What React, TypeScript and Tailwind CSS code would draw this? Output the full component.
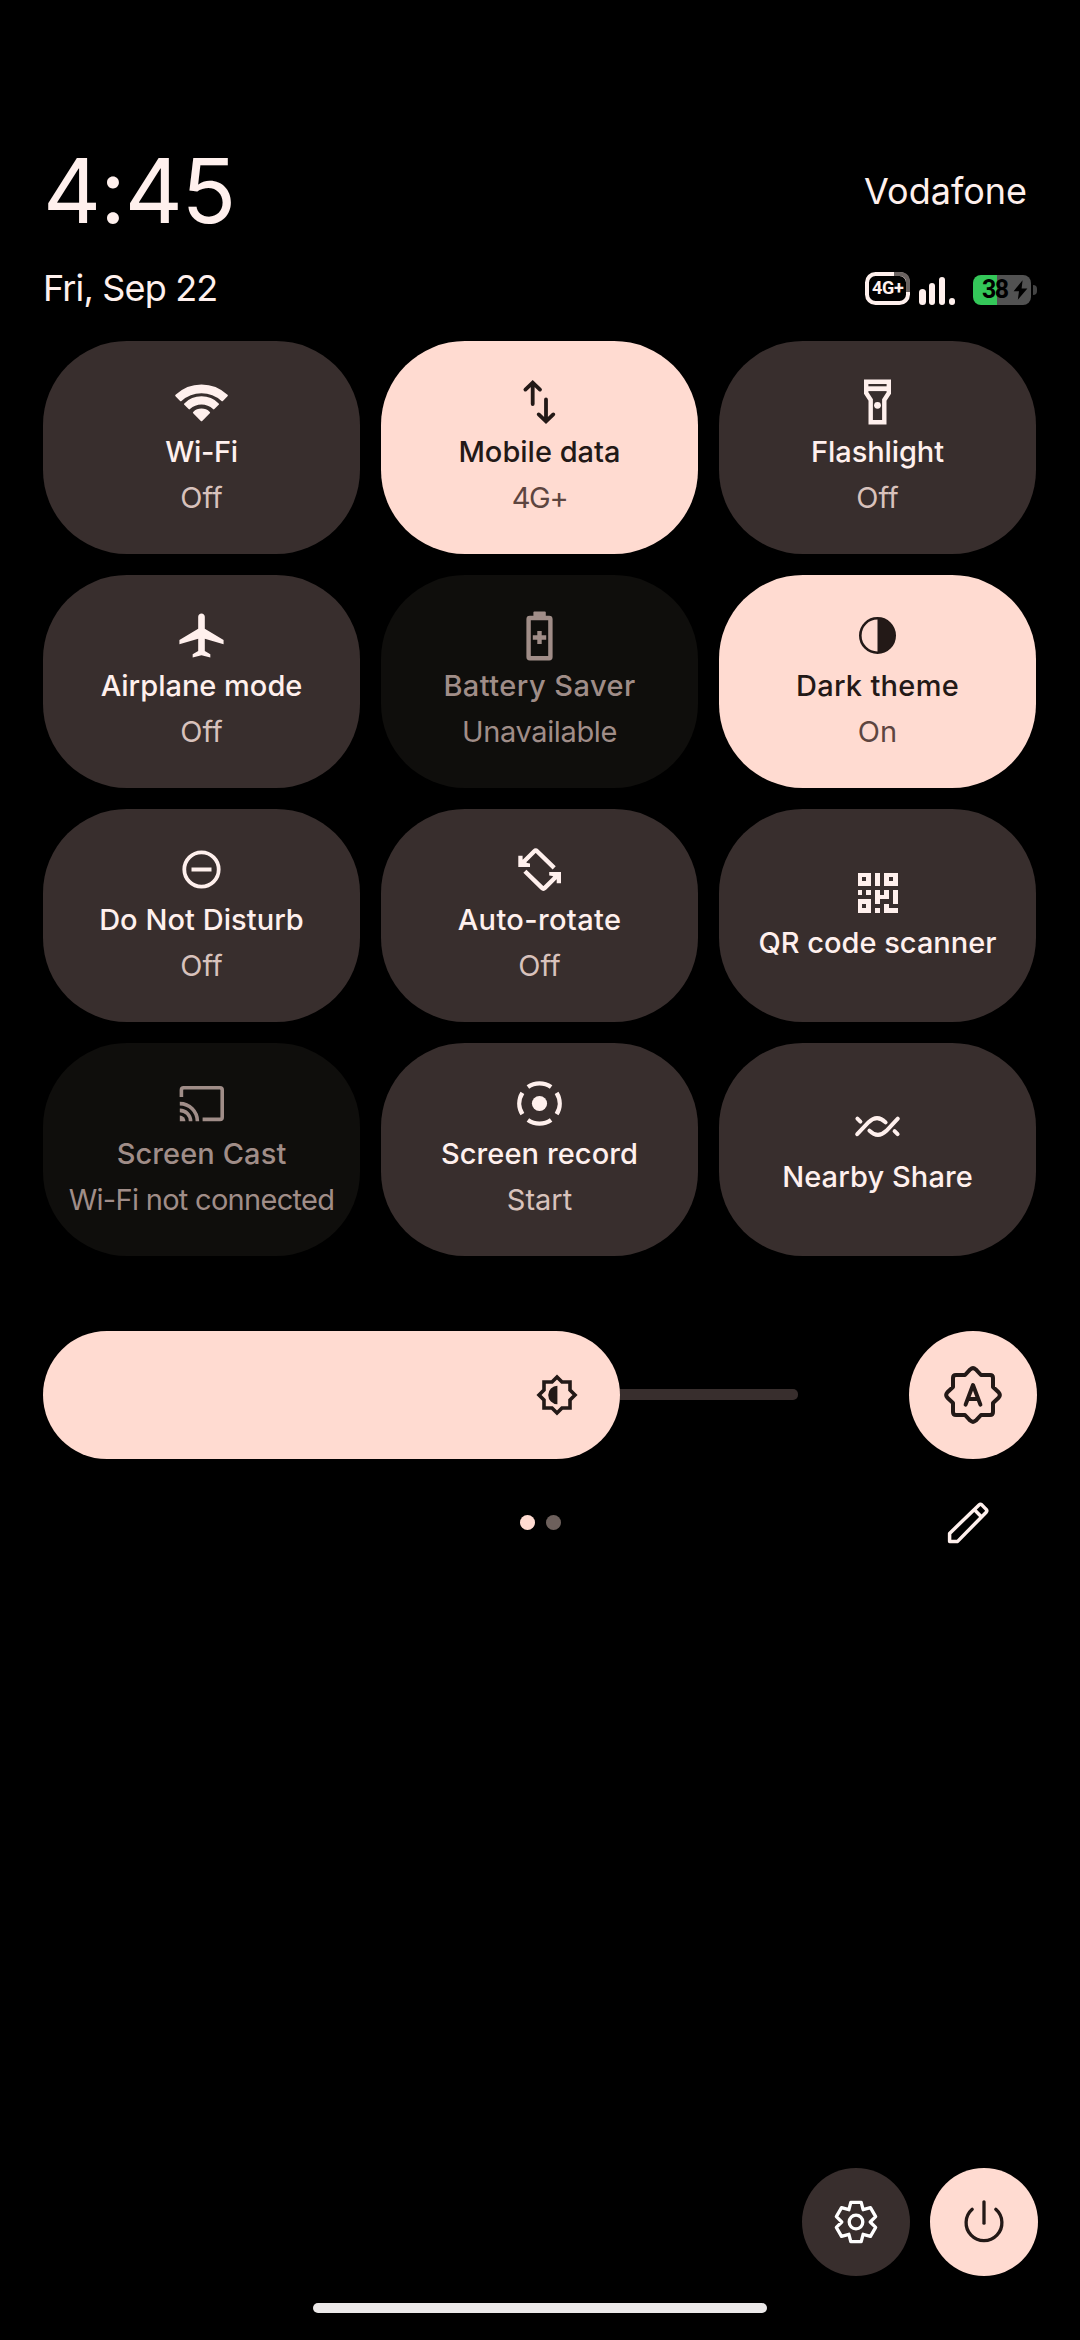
import type { ReactNode } from "react";

type Variant = "off" | "on" | "disabled";

type TileData = {
  label: string;
  labelTracking?: string;
  sub?: string;
  subTracking?: string;
  variant: Variant;
  icon: ReactNode;
};

function Icon({ children }: { children: ReactNode }) {
  return (
    <svg viewBox="0 0 53 53" className="block size-[53px] shrink-0" fill="none">
      {children}
    </svg>
  );
}

const WifiIcon = (
  <Icon>
    <g fill="currentColor" stroke="currentColor" strokeWidth="2" strokeLinejoin="round">
      <path d="M1.2 20.3A36.8 36.8 0 0 1 51.8 20.3L47.2 24.9A30.6 30.6 0 0 0 5.8 24.9Z" transform="translate(0 .3)" />
      <path d="M10 29.4A23.5 23.5 0 0 1 43 29.4L38.7 33.7A17.6 17.6 0 0 0 14.3 33.7Z" transform="translate(0 -.3)" />
      <path d="M18.9 37.6A11 11 0 0 1 34.1 37.6L26.5 45.2Z" />
    </g>
  </Icon>
);

const MobileDataIcon = (
  <Icon>
    <g stroke="currentColor" strokeWidth="3.8" strokeLinecap="round" strokeLinejoin="miter">
      <path d="M19.7 29V8M12.4 14.6L19.7 7.6L27 14.6" />
      <path d="M33 24.5V45.5M25.7 39.4L33 46.4L40.3 39.4" />
    </g>
  </Icon>
);

const FlashlightIcon = (
  <Icon>
    <path
      d="M15.2 6.8H37.8V18L33.3 25V47.2H19.7V25L15.2 18Z"
      stroke="currentColor"
      strokeWidth="4.4"
    />
    <path d="M14 13.7H39" stroke="currentColor" strokeWidth="4.8" />
    <circle cx="26.5" cy="30.3" r="3.4" fill="currentColor" />
  </Icon>
);

const AirplaneIcon = (
  <Icon>
    <path
      transform="scale(2.2083)"
      fill="currentColor"
      d="M22,16v-2l-8.5-5V3.5C13.5,2.67,12.83,2,12,2s-1.5,0.67-1.5,1.5V9L2,14v2l8.5-2.5V19L8,20.5V22l4-1l4,1v-1.5L13.5,19v-5.5L22,16z"
    />
  </Icon>
);

const BatterySaverIcon = (
  <Icon>
    <rect x="20.4" y="2.4" width="12.4" height="6" rx="1" fill="currentColor" />
    <rect x="15.6" y="9" width="21.8" height="40.2" rx="1.2" stroke="currentColor" strokeWidth="4.4" />
    <path d="M26.5 22V35M19.8 28.5H33.2" stroke="currentColor" strokeWidth="4.4" />
  </Icon>
);

const DarkThemeIcon = (
  <Icon>
    <circle cx="26.5" cy="26.5" r="17.2" stroke="currentColor" strokeWidth="2.6" />
    <path d="M26.5 9.3A17.2 17.2 0 0 1 26.5 43.7Z" fill="currentColor" />
  </Icon>
);

const DndIcon = (
  <Icon>
    <circle cx="26.5" cy="26.5" r="17.2" stroke="currentColor" strokeWidth="3.8" />
    <path d="M16.5 26.5H36.5" stroke="currentColor" strokeWidth="4" />
  </Icon>
);

const RotateIcon = (
  <Icon>
    <g stroke="currentColor" strokeWidth="4.4" strokeLinejoin="round">
      <path d="M8.5 21L21.3 8.2Q22.7 6.8 24.1 8.2L41.2 24.8" />
      <path d="M11.9 28.2L29 44.9Q30.4 46.3 31.8 44.9L44.8 32" />
    </g>
    <g fill="currentColor">
      <path d="M5.3 12.8H9.6V16.6L14.2 20L17 20.4V24H5.3Z" />
      <path d="M36.2 29H48V40.2H43.7V36.4L39.4 33L36.2 32.6Z" />
    </g>
  </Icon>
);

/* Nine-module grid, 1 = filled. */
const QR_ROWS = [
  "111010111",
  "101010101",
  "111010111",
  "000000000",
  "101010101",
  "000011101",
  "111010001",
  "101000100",
  "111010111",
];

const QrIcon = (
  <Icon>
    <g fill="currentColor" shapeRendering="crispEdges">
      {QR_ROWS.flatMap((row, y) =>
        [...row].map((cell, x) =>
          cell === "1" ? (
            <rect key={`${x}-${y}`} x={6.5 + x * 4.45} y={6.5 + y * 4.45} width="4.5" height="4.5" />
          ) : null,
        ),
      )}
    </g>
  </Icon>
);

const CastIcon = (
  <Icon>
    <g stroke="currentColor" strokeWidth="3.6" strokeLinejoin="round">
      <path d="M6.4 20V13Q6.4 10.8 8.6 10.8H45Q47.2 10.8 47.2 13V40.2Q47.2 42.4 45 42.4H27.6" />
      <path d="M4.8 26.6A17.6 17.6 0 0 1 22.4 44.2" />
      <path d="M4.8 33.4A10.8 10.8 0 0 1 15.6 44.2" />
    </g>
    <path d="M4.8 38.6A5.6 5.6 0 0 1 10.4 44.2H4.8Z" fill="currentColor" />
  </Icon>
);

const RecordIcon = (
  <Icon>
    <g stroke="currentColor" strokeWidth="4.4">
      <path d="M14.9 10A20.2 20.2 0 0 1 38.1 10" />
      <path d="M14.9 43A20.2 20.2 0 0 0 38.1 43" />
      <path d="M43.6 15.8A20.2 20.2 0 0 1 43.6 37.2" />
      <path d="M9.4 15.8A20.2 20.2 0 0 0 9.4 37.2" />
    </g>
    <circle cx="26.5" cy="26.5" r="7.6" fill="currentColor" />
  </Icon>
);

const NearbyIcon = (
  <Icon>
    <g stroke="currentColor" strokeWidth="4" strokeLinecap="round">
      <path d="M6.2 34.2L17.6 22.2Q26.2 14 34.6 22.4" />
      <path d="M18.4 30.6Q26.8 39 35.4 30.8L46.8 18.6" />
      <path d="M6.4 18.6L9.4 21.6M43.6 31.2L46.6 34.2" />
    </g>
  </Icon>
);

const TILES: TileData[] = [
  { label: "Wi-Fi", labelTracking: "tracking-[-0.3px]", sub: "Off", variant: "off", icon: WifiIcon },
  { label: "Mobile data", sub: "4G+", subTracking: "tracking-[-1.3px]", variant: "on", icon: MobileDataIcon },
  { label: "Flashlight", labelTracking: "tracking-[-0.1px]", sub: "Off", variant: "off", icon: FlashlightIcon },
  { label: "Airplane mode", sub: "Off", variant: "off", icon: AirplaneIcon },
  { label: "Battery Saver", labelTracking: "tracking-[0.45px]", sub: "Unavailable", subTracking: "tracking-[-0.35px]", variant: "disabled", icon: BatterySaverIcon },
  { label: "Dark theme", labelTracking: "tracking-[0.3px]", sub: "On", variant: "on", icon: DarkThemeIcon },
  { label: "Do Not Disturb", labelTracking: "tracking-[0.05px]", sub: "Off", variant: "off", icon: DndIcon },
  { label: "Auto-rotate", labelTracking: "tracking-[0.35px]", sub: "Off", variant: "off", icon: RotateIcon },
  { label: "QR code scanner", variant: "off", icon: QrIcon },
  { label: "Screen Cast", labelTracking: "tracking-[0.1px]", sub: "Wi-Fi not connected", subTracking: "tracking-[-0.7px]", variant: "disabled", icon: CastIcon },
  { label: "Screen record", labelTracking: "tracking-[0.1px]", sub: "Start", variant: "off", icon: RecordIcon },
  { label: "Nearby Share", labelTracking: "tracking-[0.1px]", variant: "off", icon: NearbyIcon },
];

const TILE_STYLE: Record<Variant, string> = {
  off: "bg-[#382e2d] text-[#fff0ed]",
  on: "bg-[#ffdbd1] text-[#231917]",
  disabled: "bg-[#0f0e0c] text-[#a08d88]",
};

const SUB_STYLE: Record<Variant, string> = {
  off: "text-[#d8c2bc]",
  on: "text-[#5d453f]",
  disabled: "text-[#a08d88]",
};

function Tile({ label, labelTracking = "", sub, subTracking = "", variant, icon }: TileData) {
  return (
    <button
      className={`flex h-[213px] w-[317px] flex-col items-center justify-center rounded-[84px] text-[29px] leading-[46px] whitespace-nowrap ${TILE_STYLE[variant]}`}
    >
      {icon}
      <span className={`-mb-px pt-px font-medium ${labelTracking}`}>{label}</span>
      {sub && <span className={`-mb-px pt-px font-normal ${SUB_STYLE[variant]} ${subTracking}`}>{sub}</span>}
    </button>
  );
}

function NetworkBadge() {
  return (
    <div className="relative flex h-[33px] w-[45px] items-center justify-center">
      <svg viewBox="0 0 45 33" className="absolute inset-0 size-full" fill="none" strokeWidth="4">
        <rect x="2" y="2" width="41" height="29" rx="8.5" stroke="#fff0ed" />
        <path d="M29 2H34.5Q43 2 43 10.5V20" stroke="#6b6361" />
      </svg>
      <span className="relative font-['Roboto',sans-serif] text-[18px] leading-none font-bold tracking-[-0.3px] text-[#fff0ed]">4G+</span>
    </div>
  );
}

function SignalBars() {
  return (
    <div className="ml-[9px] flex h-[28px] items-end gap-[3.5px]">
      <div className="h-4 w-[6.3px] rounded-full bg-[#fff0ed]" />
      <div className="h-[22px] w-[6.3px] rounded-full bg-[#fff0ed]" />
      <div className="h-[28px] w-[6.3px] rounded-full bg-[#fff0ed]" />
      <div className="size-[6.3px] rounded-full bg-[#fff0ed]" />
    </div>
  );
}

function Battery() {
  return (
    <div className="ml-[18px] flex items-center gap-[2px]">
      <div className="flex h-[30px] w-[58px] items-center overflow-hidden rounded-[8px] bg-[linear-gradient(90deg,#34c759_24px,#525252_24px)] pl-[9px]">
        <span className="w-[25px] font-['Roboto',sans-serif] text-[25px] leading-[30px] font-bold tracking-[-1.6px] text-black">38</span>
        <svg viewBox="0 0 15 20" className="ml-[5.5px] h-5 w-[15px] shrink-0">
          <path d="M9.6.2L.6 11.2H6L4.8 19.8L14.4 8.4H8.6Z" fill="#000" />
        </svg>
      </div>
      <div className="h-[10px] w-[4px] rounded-r-full bg-[#434343]" />
    </div>
  );
}

/* Six-tooth cog built from two tooth corners and one valley per 60 degrees. */
const GEAR_POINTS = Array.from({ length: 6 }, (_, k) => {
  const a = (k * Math.PI) / 3;
  return [
    [-5.2, -19.7],
    [5.2, -19.7],
    [7.1, -12.3],
  ]
    .map(([x, y]) => `${22 + x * Math.cos(a) - y * Math.sin(a)},${22 + x * Math.sin(a) + y * Math.cos(a)}`)
    .join(" ");
}).join(" ");

export default function App() {
  return (
    <div className="flex h-[2340px] w-[1080px] flex-col bg-black px-[43px] pt-[141px] font-['Inter',sans-serif] text-[#fff0ed]">
      <header>
        <div className="flex h-[100px] items-center justify-between pr-[10px]">
          <span className="text-[90px] leading-[100px] tracking-[-1.2px]">4:45</span>
          <span className="text-[36px]">Vodafone</span>
        </div>
        <div className="flex h-[94px] items-center justify-between">
          <span className="text-[36px] tracking-[-0.85px]">Fri, Sep 22</span>
          <div className="flex items-end">
            <NetworkBadge />
            <SignalBars />
            <Battery />
          </div>
        </div>
      </header>

      <main className="mt-[6px]">
        <div className="grid w-[993px] grid-cols-[repeat(3,317px)] gap-[21px]">
          {TILES.map((tile) => (
            <Tile key={tile.label} {...tile} />
          ))}
        </div>

        <div className="mt-[75px] flex w-[994px] items-center justify-between">
          <div className="flex w-[755px] items-center">
            <div className="flex h-[128px] w-[577px] items-center justify-end rounded-full bg-[#ffdbd1] pr-[42px]">
              <svg viewBox="0 0 42 42" className="size-[42px]" fill="none">
                <path
                  d="M21 3L26 8H34V16L39 21L34 26V34H26L21 39L16 34H8V26L3 21L8 16V8H16Z"
                  stroke="#231917"
                  strokeWidth="3.6"
                />
                <path d="M21.4 11.8A9.2 9.2 0 0 0 21.4 30.2Z" fill="#231917" />
              </svg>
            </div>
            <div className="mb-px h-[11px] grow rounded-r-[5px] bg-[#382e2d]" />
          </div>
          <button className="flex size-[128px] items-center justify-center rounded-full bg-[#ffdbd1]">
            <svg
              viewBox="0 0 58 58"
              className="size-[58px]"
              fill="none"
              stroke="#231917"
              strokeWidth="4"
              strokeLinejoin="round"
              strokeLinecap="round"
            >
              <path d="M26.2 3.4Q29 1 31.8 3.4L37 9H46Q49 9 49 12V21L54.6 26.2Q57 29 54.6 31.8L49 37V46Q49 49 46 49H37L31.8 54.6Q29 57 26.2 54.6L21 49H12Q9 49 9 46V37L3.4 31.8Q1 29 3.4 26.2L9 21V12Q9 9 12 9H21Z" />
              <path d="M21.6 38.6L29 19L36.4 38.6M24.3 33H33.7" />
            </svg>
          </button>
        </div>

        <div className="mt-[32px] grid h-[63px] w-[994px] grid-cols-[1fr_auto_1fr] items-center">
          <span />
          <div className="flex gap-[11px]">
            <span className="size-[15px] rounded-full bg-[#ffdbd1]" />
            <span className="size-[15px] rounded-full bg-[#6d605c]" />
          </div>
          <svg
            viewBox="0 0 42 42"
            className="mr-[48px] size-[42px] justify-self-end"
            fill="none"
            stroke="#fff0ed"
            strokeWidth="3.5"
            strokeLinejoin="round"
          >
            <path d="M2.6 39.4V31.4L32 2.9Q33.4 1.6 34.8 2.9L39.2 7.4Q40.4 8.8 39.2 10.2L10.6 39.4Z" />
            <path d="M27.2 7.6L34.6 15" />
          </svg>
        </div>
      </main>

      <footer className="mt-auto">
        <div className="flex w-[995px] justify-end gap-[20px]">
          <button className="flex size-[108px] items-center justify-center rounded-full bg-[#382e2d]">
            <svg viewBox="0 0 44 44" className="size-[44px]" fill="none" stroke="#fff" strokeWidth="3.3" strokeLinejoin="round">
              <polygon points={GEAR_POINTS} />
              <circle cx="22" cy="22" r="6.8" />
            </svg>
          </button>
          <button className="flex size-[108px] items-center justify-center rounded-full bg-[#ffdbd1]">
            <svg viewBox="0 0 44 44" className="size-[44px]" fill="none" stroke="#231917" strokeWidth="3.3" strokeLinecap="round">
              <path d="M22 1.8V23.2" />
              <path d="M10.2 9.3A17.9 17.9 0 1 0 33.8 9.3" />
            </svg>
          </button>
        </div>
        <div className="mx-auto mt-[27px] mb-[27px] h-[10px] w-[454px] rounded-full bg-[#ece9e9]" />
      </footer>
    </div>
  );
}
